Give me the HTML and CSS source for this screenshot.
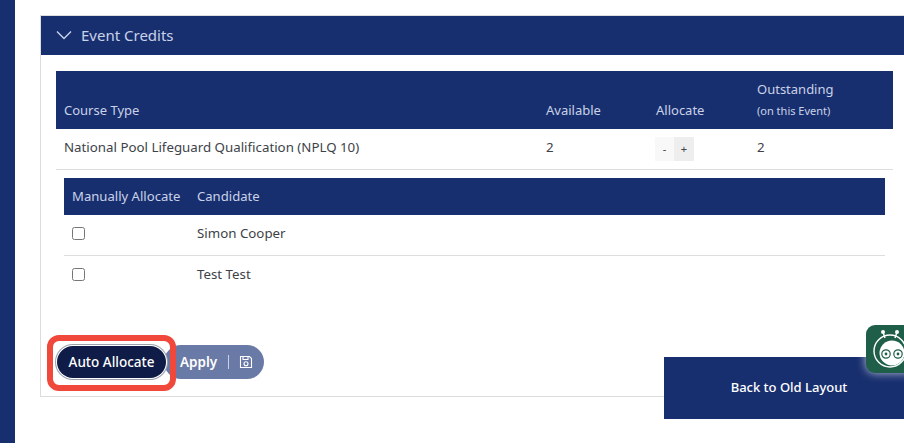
FILE: index.html
```html
<!DOCTYPE html>
<html lang="en">
<head>
<meta charset="utf-8">
<title>Event Credits</title>
<link rel="stylesheet" href="styles.css">
</head>
<body>
<div class="page">
  <aside class="sidebar"></aside>
  <main class="main">
    <section class="panel">
      <header class="panel-head">
        <svg class="chevron" width="16" height="10" viewBox="0 0 16 10"><path d="M1 1.5 8 8.5 15 1.5" fill="none" stroke="#c9d2e8" stroke-width="1.4"/></svg>
        <span>Event Credits</span>
      </header>
      <div class="panel-body">
        <div class="credit-head">
          <div class="c-type">Course Type</div>
          <div class="c-avail">Available</div>
          <div class="c-alloc">Allocate</div>
          <div class="c-out">Outstanding<small>(on this Event)</small></div>
        </div>
        <div class="credit-row">
          <div class="c-type">National Pool Lifeguard Qualification (NPLQ 10)</div>
          <div class="c-avail">2</div>
          <div class="c-alloc stepper"><span class="minus">-</span><span class="plus">+</span></div>
          <div class="c-out">2</div>
        </div>
        <div class="cand">
          <div class="cand-head"><div class="c-check">Manually Allocate</div><div>Candidate</div></div>
          <div class="cand-row"><div class="c-check"><span class="box"></span></div><div>Simon Cooper</div></div>
          <div class="cand-row last"><div class="c-check"><span class="box"></span></div><div>Test Test</div></div>
        </div>
        <div class="actions">
          <button class="btn auto">Auto Allocate</button>
          <button class="btn apply">Apply<i class="sep"></i>
            <svg width="14" height="14" viewBox="0 0 14 14" fill="none" stroke="#fff" stroke-width="1.1"><path d="M1.5 1.5h9l2 2v9h-11z"/><path d="M4 1.5v3h5v-3"/><circle cx="7" cy="8.8" r="2"/></svg>
          </button>
        </div>
      </div>
    </section>
  </main>
</div>
<div class="highlight"></div>
<button class="back">Back to Old Layout</button>
<div class="bot">
  <svg width="38" height="48" viewBox="0 0 38 48" fill="none" stroke="#fff">
    <path d="M13 13 11 7M23 13 25 7" stroke-width="1.4"/>
    <circle cx="11" cy="7" r="2" fill="#fff" stroke="none"/><circle cx="25" cy="7" r="2" fill="#fff" stroke="none"/>
    <circle cx="18" cy="26" r="16" stroke-width="1.4"/>
    <circle cx="20" cy="28" r="12.5" fill="#fff" stroke="none"/>
    <circle cx="14" cy="29" r="4.2" stroke="#1f5e49" stroke-width="1.2"/><circle cx="14" cy="29" r="1.4" fill="#1f5e49" stroke="none"/>
    <circle cx="26" cy="29" r="4.2" stroke="#1f5e49" stroke-width="1.2"/><circle cx="26" cy="29" r="1.4" fill="#1f5e49" stroke="none"/>
  </svg>
</div>
</body>
</html>
```
FILE: styles.css
```css
* { box-sizing: border-box; }
html, body { margin: 0; height: 100%; overflow: hidden; background: #fff; }
body { font-family: "Noto Sans", sans-serif; font-size: 13.3px; color: #3d4248; position: relative; }
.page { display: flex; align-items: flex-start; height: 443px; }
.sidebar { width: 15px; height: 443px; background: #182f6f; flex: none; }
.main { flex: 1; min-width: 0; padding: 15px 0 0 25px; }
.panel { border: 1px solid #dddddd; border-right: 0; height: 382px; }
.panel-head { height: 39px; background: #182f6f; color: #c9d2e8; font-size: 15px; display: flex; align-items: center; gap: 9px; padding: 0 0 2px 15px; }
.panel-body { padding: 16px 11px 0 15px; }
.credit-head, .credit-row { display: flex; padding-left: 8px; }
.credit-head { height: 58px; background: #182f6f; color: #c9d2e8; font-size: 13px; align-items: flex-end; padding-bottom: 10px; }
.credit-row { height: 41px; align-items: center; border-bottom: 1px solid #dddddd; padding-bottom: 5px; }
.c-type { width: 482px; flex: none; }
.c-avail { width: 110px; flex: none; }
.c-alloc { width: 101px; flex: none; }
.credit-head .c-out { margin-bottom: 1px; }
.c-out small { display: block; font-size: 11px; margin-top: 5px; }
.stepper { display: flex; font-size: 11px; margin: 4px 0 0 -1px; width: 102px; }
.stepper span { width: 20px; height: 24px; display: flex; align-items: center; justify-content: center; background: #f8f8f8; }
.stepper .minus { width: 19px; }
.stepper .plus { background: #eeeeee; }
.cand { margin: 8px 8px 0; }
.cand-head, .cand-row { display: flex; align-items: center; }
.cand-head { height: 37px; background: #182f6f; color: #c9d2e8; font-size: 13.1px; padding-bottom: 2px; }
.cand-row { height: 41px; border-bottom: 1px solid #dddddd; padding-bottom: 4px; }
.cand-row.last { border-bottom: 0; height: 39px; padding-bottom: 3px; }
.c-check { width: 125px; flex: none; padding-left: 8px; margin-right: 8px; }
.box { display: block; width: 13px; height: 13px; border: 1px solid #767676; border-radius: 2.5px; background: #fff; }
.actions { display: flex; align-items: center; margin: 50px 0 0 1px; }
.btn { height: 34px; border: 0; border-radius: 17px; font: inherit; font-size: 13.5px; color: #fff; padding: 0 0 1px; }
.auto { width: 109px; height: 32px; background: #0f1c47; font-weight: 500; box-shadow: 0 0 0 1px #fff, 0 0 0 2px #9aa0ac; position: relative; z-index: 1; }
.apply { width: 100px; margin-left: -2px; background: #6a7aa6; font-weight: 600; display: flex; align-items: center; padding-left: 16px; }
.sep { width: 1px; height: 14px; background: #c9d2e8; margin: 0 10px 0 11px; }
.highlight { position: absolute; left: 47px; top: 335px; width: 129px; height: 56px; border: 6px solid #f0483a; border-radius: 12px; z-index: 2; }
.back { position: absolute; left: 664px; top: 357px; width: 240px; height: 62px; border: 0; background: #182f6f; color: #fff; font: 500 13px "Noto Sans", sans-serif; padding: 0 0 2px 10px; }
.bot { position: absolute; left: 866px; top: 325px; width: 50px; height: 48px; background: #1f5e49; border-radius: 9px; box-shadow: 0 0 10px rgba(255,255,255,.7); padding-left: 6px; }
```
